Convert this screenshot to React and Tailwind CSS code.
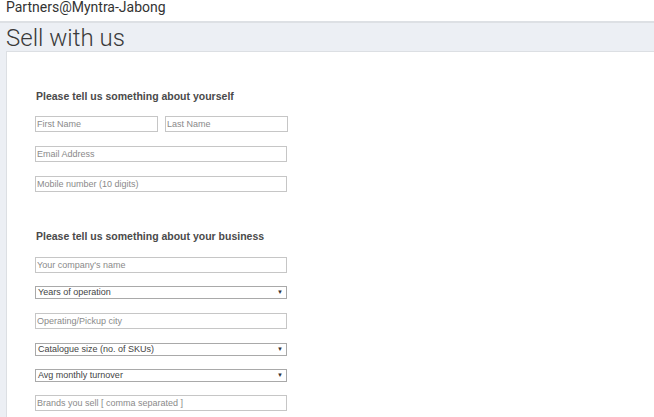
import React from "react";

const inputCls =
  "block h-[16px] border border-[#c6c6c6] bg-white px-[1px] text-[9px] text-[#333] placeholder:text-[#8a8a8a] outline-none";

function Field({ placeholder, className = "w-[252px]" }) {
  return <input type="text" placeholder={placeholder} className={`${inputCls} ${className}`} />;
}

function Select({ label }) {
  return (
    <div className="flex h-[13px] w-[252px] items-center justify-between border border-[#a9a9a9] bg-white pl-[2px] pr-[3px]">
      <span className="text-[9px] leading-[11px] text-[#444]">{label}</span>
      <span className="text-[6px] leading-[9px] text-[#333]">▼</span>
    </div>
  );
}

export default function App() {
  return (
    <div className="h-[417px] w-[654px] overflow-hidden bg-white font-['Liberation_Sans',Arial,sans-serif]">
      {/* top header */}
      <div className="h-[21px] pl-[6px] font-['Roboto',sans-serif] text-[14px] leading-[15px] text-[#333]">
        Partners@Myntra-Jabong
      </div>

      {/* page band */}
      <div className="border-t-2 border-[#dde0e4] bg-[#eceff4] pl-[6px]">
        <h1 className="h-[28px] font-['Roboto',sans-serif] text-[24px] font-light leading-[30px] text-[#3a3a3a]">
          Sell with us
        </h1>
        <div className="h-[370px] border-l border-t border-[#dcdfe3] bg-white pl-[28px] pt-[38px]">
          <h2 className="ml-[1px] text-[10.5px] font-bold leading-[12px] text-[#4a4a4a]">
            Please tell us something about yourself
          </h2>
          <div className="mt-[14px] flex gap-[7px]">
            <Field placeholder="First Name" className="w-[123px]" />
            <Field placeholder="Last Name" className="w-[123px]" />
          </div>
          <div className="mt-[14px]">
            <Field placeholder="Email Address" />
          </div>
          <div className="mt-[14px]">
            <Field placeholder="Mobile number (10 digits)" />
          </div>

          <h2 className="ml-[1px] mt-[38px] text-[10.5px] font-bold leading-[12px] text-[#4a4a4a]">
            Please tell us something about your business
          </h2>
          <div className="mt-[15px]">
            <Field placeholder="Your company's name" />
          </div>
          <div className="mt-[13px]">
            <Select label="Years of operation" />
          </div>
          <div className="mt-[14px]">
            <Field placeholder="Operating/Pickup city" />
          </div>
          <div className="mt-[14px]">
            <Select label="Catalogue size (no. of SKUs)" />
          </div>
          <div className="mt-[13px]">
            <Select label="Avg monthly turnover" />
          </div>
          <div className="mt-[13px]">
            <Field placeholder="Brands you sell [ comma separated ]" />
          </div>
        </div>
      </div>
    </div>
  );
}
